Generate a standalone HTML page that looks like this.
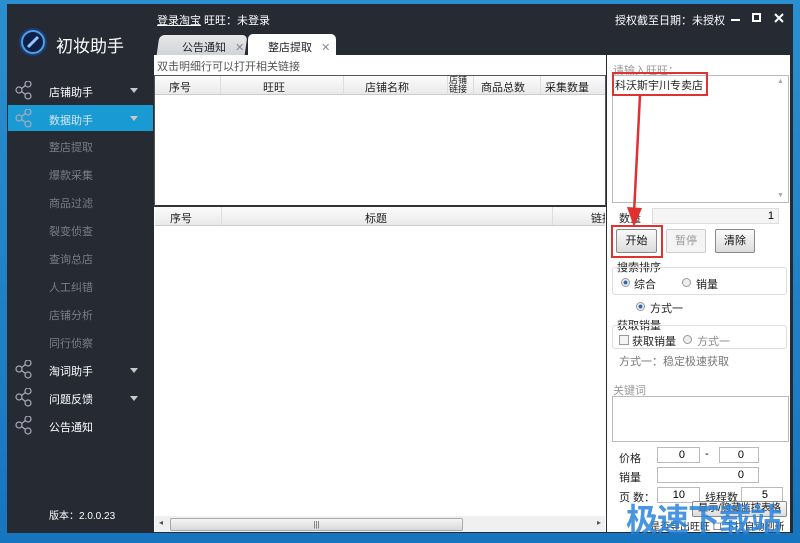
<!DOCTYPE html>
<html><head><meta charset="utf-8"><style>
*{margin:0;padding:0;box-sizing:border-box}
body{width:800px;height:543px;overflow:hidden;background:linear-gradient(#2a8fd0,#1775c0);font-family:"Liberation Sans","Noto Sans CJK SC",sans-serif;font-size:11px;position:relative}
.a{position:absolute;white-space:nowrap}
.win{left:7px;top:4px;width:786px;height:529px;background:#262a32}
.side{color:#fff;font-size:11px}
.sub{color:#7a7d84;font-size:11px;left:49px}
.tri{width:0;height:0;border-left:4px solid transparent;border-right:4px solid transparent;border-top:5px solid #c8c8c8}
.w{background:#fff}
.hd{background:linear-gradient(#fbfbfb,#eaeaea);border-bottom:1px solid #ccc;height:19px;color:#222;overflow:hidden}
.hd span{position:absolute;top:3px;white-space:nowrap}
.sep{position:absolute;top:0;width:1px;height:19px;background:#ddd}
.btn{border:1px solid #8a8a8a;border-radius:2px;background:linear-gradient(#fafafa,#dcdcdc);text-align:center;line-height:22px;height:24px;color:#111}
.inp{border:1px solid #bbb;background:#fff;text-align:right;padding-right:14px;line-height:14px;height:16px}
.grp{border:1px solid #ddd;border-radius:3px}
.rad{width:9px;height:9px;border-radius:50%;border:1px solid #999;background:#eee}
.rad.on{background:radial-gradient(#3366aa 35%,#eee 45%)}
.t{color:#222}
</style></head><body>
<div class="a win"></div>
<svg class="a" style="left:17px;top:26px" width="32" height="32"><circle cx="16" cy="16" r="14" fill="#1c3c7a"/><circle cx="16" cy="16" r="11" fill="#0f1f48" stroke="#4fa0e0" stroke-width="2"/><path d="M11 21 L21 11" stroke="#8fc8ff" stroke-width="3"/></svg>
<div class="a" style="left:56px;top:32px;color:#fff;font-size:17px">初妆助手</div>
<div class="a" style="left:157px;top:12px;color:#fff;font-size:11px"><u>登录淘宝</u> 旺旺：未登录</div>
<div class="a" style="left:615px;top:12px;color:#fff;font-size:11px">授权截至日期：未授权</div>
<div class="a" style="left:731px;top:19px;width:9px;height:2px;background:#fff"></div>
<div class="a" style="left:752px;top:13px;width:9px;height:9px;border:2px solid #fff"></div>
<svg class="a" style="left:774px;top:13px" width="10" height="10"><path d="M1 1L9 9M9 1L1 9" stroke="#fff" stroke-width="2"/></svg>
<div class="a" style="left:158px;top:35px;width:88px;height:21px;background:linear-gradient(#e8e8e8,#cfd2d6);border-radius:5px 5px 0 0;transform:skewX(-8deg)"></div>
<div class="a" style="left:182px;top:39px;color:#222">公告通知 <span style="color:#888;margin-left:6px">✕</span></div>
<div class="a" style="left:248px;top:34px;width:88px;height:22px;background:#fff;border-radius:5px 5px 0 0"></div>
<div class="a" style="left:268px;top:39px;color:#222">整店提取 <span style="color:#888;margin-left:6px">✕</span></div>
<svg class="a" width="0" height="0"><defs><g id="sh" fill="none" stroke="#aab" stroke-width="1.2"><circle cx="4" cy="9" r="3"/><circle cx="13" cy="3" r="3"/><circle cx="13" cy="15" r="3"/><path d="M6.5 7.5L10.5 4.5M6.5 10.5L10.5 13.5"/></g></defs></svg>
<svg class="a" style="left:15px;top:81px" width="20" height="20"><use href="#sh"/></svg>
<div class="a side" style="left:49px;top:84px">店铺助手</div><div class="a tri" style="left:130px;top:88px"></div>
<div class="a" style="left:8px;top:105px;width:145px;height:26px;background:#1a9ad2"></div>
<svg class="a" style="left:15px;top:109px" width="20" height="20"><use href="#sh" style="stroke:#cfeaff"/></svg>
<div class="a side" style="left:49px;top:112px;color:#d0e8f5">数据助手</div><div class="a tri" style="left:130px;top:116px"></div>
<div class="a sub" style="top:139px">整店提取</div>
<div class="a sub" style="top:167px">爆款采集</div>
<div class="a sub" style="top:195px">商品过滤</div>
<div class="a sub" style="top:223px">裂变侦查</div>
<div class="a sub" style="top:251px">查询总店</div>
<div class="a sub" style="top:279px">人工纠错</div>
<div class="a sub" style="top:307px">店铺分析</div>
<div class="a sub" style="top:335px">同行侦察</div>
<svg class="a" style="left:15px;top:360px" width="20" height="20"><use href="#sh"/></svg>
<div class="a side" style="left:49px;top:363px">淘词助手</div><div class="a tri" style="left:130px;top:368px"></div>
<svg class="a" style="left:15px;top:388px" width="20" height="20"><use href="#sh"/></svg>
<div class="a side" style="left:49px;top:391px">问题反馈</div><div class="a tri" style="left:130px;top:396px"></div>
<svg class="a" style="left:15px;top:416px" width="20" height="20"><use href="#sh"/></svg>
<div class="a side" style="left:49px;top:419px">公告通知</div>
<div class="a side" style="left:49px;top:507px;font-size:10px">版本：2.0.0.23</div>
<div class="a w" style="left:154px;top:55px;width:452px;height:477px"></div>
<div class="a" style="left:157px;top:58px;color:#555">双击明细行可以打开相关链接</div>
<div class="a" style="left:154px;top:75px;width:452px;height:132px;border:1px solid #555;border-bottom:2px solid #333"></div>
<div class="a hd" style="left:155px;top:76px;width:450px">
<span style="left:14px">序号</span><div class="sep" style="left:65px"></div><span style="left:108px">旺旺</span><div class="sep" style="left:188px"></div><span style="left:210px">店铺名称</span><div class="sep" style="left:292px"></div><span style="left:294px;top:0;font-size:9px;line-height:9px">店铺<br>链接</span><div class="sep" style="left:318px"></div><span style="left:326px">商品总数</span><div class="sep" style="left:385px"></div><span style="left:390px">采集数量</span>
</div>
<div class="a hd" style="left:155px;top:207px;width:450px">
<span style="left:15px">序号</span><div class="sep" style="left:66px"></div><span style="left:210px">标题</span><div class="sep" style="left:397px"></div><span style="left:436px">链接</span>
</div>
<div class="a" style="left:155px;top:516px;width:450px;height:16px;background:#f0f0f0"></div>
<div class="a" style="left:170px;top:518px;width:293px;height:13px;border:1px solid #aaa;border-radius:2px;background:linear-gradient(#f5f5f5,#d8d8d8);text-align:center;font-size:8px;line-height:11px;color:#555">|||</div>
<div class="a" style="left:159px;top:518px;font-size:8px;color:#555">◂</div><div class="a" style="left:597px;top:518px;font-size:8px;color:#555">▸</div>
<div class="a w" style="left:607px;top:55px;width:183px;height:477px"></div>
<div class="a" style="left:613px;top:62px;color:#999">请输入旺旺：</div>
<div class="a" style="left:612px;top:75px;width:177px;height:128px;border:1px solid #bbb"></div>
<div class="a" style="left:612px;top:72px;width:96px;height:24px;border:2px solid #d33"></div>
<div class="a t" style="left:615px;top:77px">科沃斯宇川专卖店</div>
<div class="a" style="left:777px;top:78px;font-size:7px;color:#aaa">▲</div><div class="a" style="left:777px;top:192px;font-size:7px;color:#aaa">▼</div>
<div class="a t" style="left:619px;top:210px">数量</div>
<div class="a inp" style="left:652px;top:208px;width:127px;padding-right:4px;background:#f4f4f4;border-color:#ddd">1</div>
<div class="a" style="left:611px;top:225px;width:52px;height:33px;border:2px solid #d33"></div>
<div class="a btn" style="left:616px;top:229px;width:41px">开始</div>
<div class="a btn" style="left:666px;top:229px;width:40px;color:#999;border-color:#ccc;background:#f4f4f4">暂停</div>
<div class="a btn" style="left:715px;top:229px;width:40px">清除</div>
<svg class="a" style="left:620px;top:95px" width="30" height="135"><path d="M20 0 L14 118" stroke="#e03030" stroke-width="2.5"/><path d="M7 112 L14 132 L22 113 Z" fill="#e03030"/></svg>
<div class="a t" style="left:617px;top:259px">搜索排序</div>
<div class="a grp" style="left:612px;top:267px;width:175px;height:28px"></div>
<div class="a rad on" style="left:621px;top:278px"></div><div class="a t" style="left:634px;top:276px">综合</div>
<div class="a rad" style="left:682px;top:278px"></div><div class="a t" style="left:696px;top:276px">销量</div>
<div class="a rad on" style="left:636px;top:302px"></div><div class="a t" style="left:650px;top:300px">方式一</div>
<div class="a t" style="left:617px;top:317px">获取销量</div>
<div class="a grp" style="left:612px;top:325px;width:175px;height:24px"></div>
<div class="a" style="left:619px;top:335px;width:10px;height:10px;border:1px solid #999;background:#f4f4f4"></div><div class="a t" style="left:632px;top:333px">获取销量</div>
<div class="a rad" style="left:683px;top:335px"></div><div class="a" style="left:697px;top:333px;color:#888">方式一</div>
<div class="a" style="left:619px;top:353px;color:#777">方式一：稳定极速获取</div>
<div class="a" style="left:613px;top:382px;color:#999">关键词</div>
<div class="a" style="left:612px;top:396px;width:177px;height:46px;border:1px solid #bbb"></div>
<div class="a t" style="left:619px;top:450px">价格</div>
<div class="a inp" style="left:657px;top:447px;width:43px">0</div>
<div class="a" style="left:705px;top:448px">-</div>
<div class="a inp" style="left:719px;top:447px;width:40px">0</div>
<div class="a t" style="left:619px;top:469px">销量</div>
<div class="a inp" style="left:657px;top:467px;width:102px">0</div>
<div class="a t" style="left:619px;top:489px">页 数：</div>
<div class="a inp" style="left:657px;top:487px;width:43px">10</div>
<div class="a t" style="left:705px;top:489px">线程数</div>
<div class="a inp" style="left:741px;top:487px;width:42px">5</div>
<div class="a btn" style="left:692px;top:501px;width:95px;height:16px;line-height:14px;font-size:10px">显示/隐藏监控表格</div>
<div class="a t" style="left:650px;top:518px;font-size:10px">是否导出旺旺 ☐ 下拉自动刷新</div>
<div class="a" style="left:626px;top:498px;font-size:32px;line-height:40px;font-weight:bold;color:rgba(40,130,220,.85);letter-spacing:-1px;font-family:'Noto Sans CJK SC',sans-serif">极速下载站</div>
</body></html>
